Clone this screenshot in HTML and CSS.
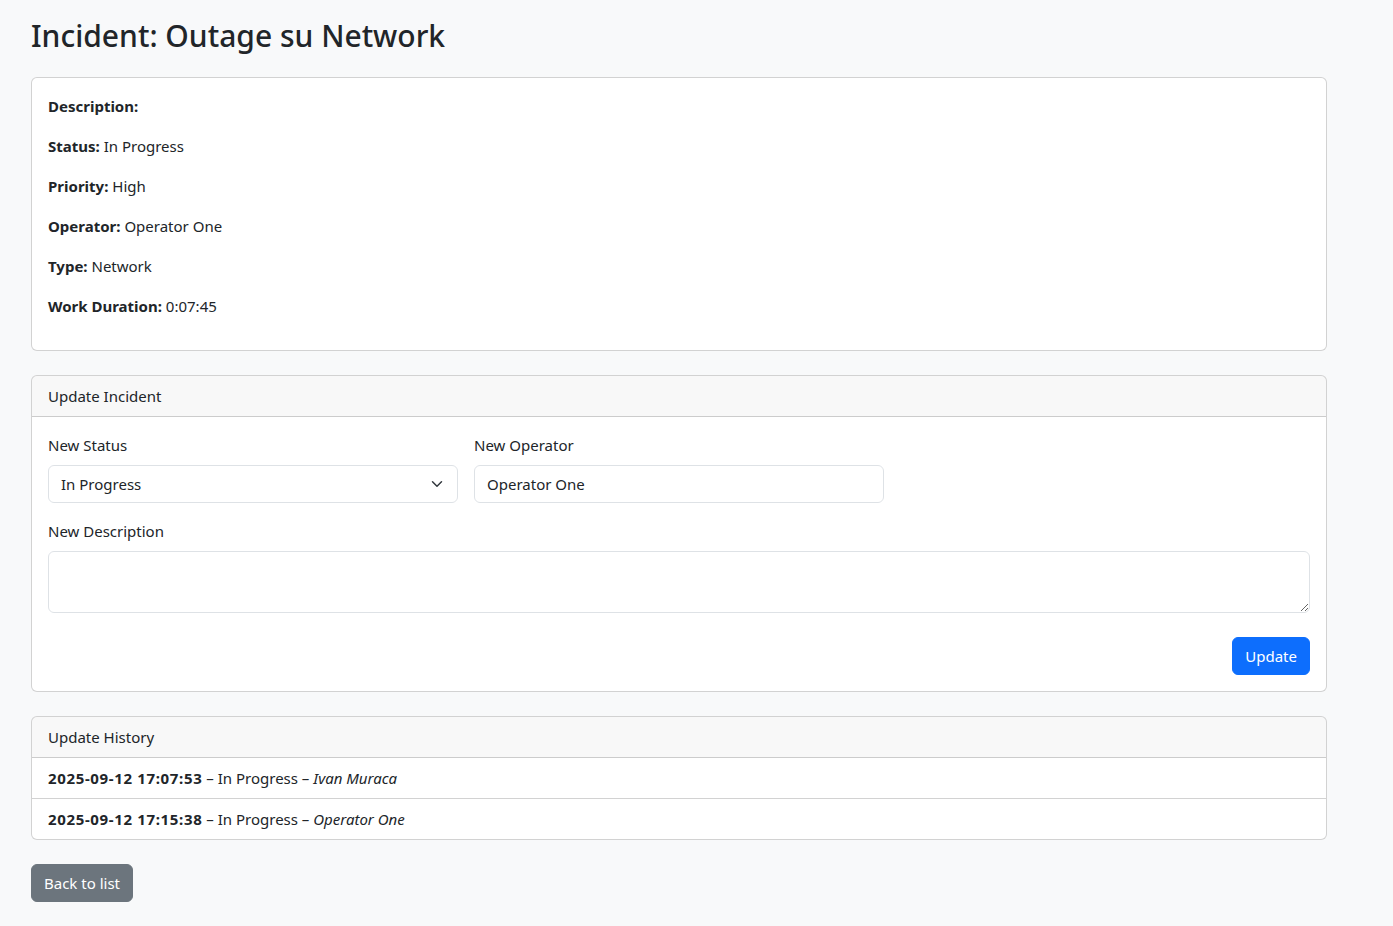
FILE: index.html
```html
<!DOCTYPE html>
<html lang="en">
<head>
<meta charset="utf-8">
<title>Incident: Outage su Network</title>
<link rel="stylesheet" href="styles.css">
</head>
<body>
<div class="container">
  <h1 class="title">Incident: Outage su Network</h1>

  <div class="card">
    <div class="card-body">
      <p><strong>Description:</strong> </p>
      <p><strong>Status:</strong> In Progress</p>
      <p><strong>Priority:</strong> High</p>
      <p><strong>Operator:</strong> Operator One</p>
      <p><strong>Type:</strong> Network</p>
      <p><strong>Work Duration:</strong> 0:07:45</p>
    </div>
  </div>

  <div class="card">
    <div class="card-header">Update Incident</div>
    <div class="card-body">
      <form class="form">
        <div class="row">
          <div class="col">
            <label class="form-label">New Status</label>
            <div class="select">
              <span>In Progress</span>
              <svg class="chev" width="16" height="16" viewBox="0 0 16 16"><path d="m2 5 6 6 6-6" fill="none" stroke="#343a40" stroke-width="2" stroke-linecap="round" stroke-linejoin="round"/></svg>
            </div>
          </div>
          <div class="col">
            <label class="form-label">New Operator</label>
            <input class="form-control" type="text" value="Operator One">
          </div>
        </div>
        <div class="full">
          <label class="form-label">New Description</label>
          <textarea class="form-control textarea" rows="2"></textarea>
        </div>
        <div class="actions">
          <button type="button" class="btn btn-primary">Update</button>
        </div>
      </form>
    </div>
  </div>

  <div class="card">
    <div class="card-header">Update History</div>
    <ul class="list">
      <li class="list-item"><strong class="stamp">2025-09-12 17:07:53</strong> – In Progress – <em>Ivan Muraca</em></li>
      <li class="list-item"><strong class="stamp">2025-09-12 17:15:38</strong> – In Progress – <em>Operator One</em></li>
    </ul>
  </div>

  <a class="btn btn-secondary" href="#">Back to list</a>
</div>
</body>
</html>
```

FILE: styles.css
```css
* { box-sizing: border-box; }

html, body {
  margin: 0;
  padding: 0;
}

body {
  background: #f8f9fa;
  color: #212529;
  font-family: "Noto Sans", "Open Sans", sans-serif;
  font-size: 15px;
  line-height: 24px;
}

.container {
  width: 1296px;
  margin-left: 31px;
  padding-top: 18px;
  padding-bottom: 24px;
}

.title {
  font-size: 30px;
  font-weight: 500;
  line-height: 36px;
  margin: 0 0 23px 0;
}

.card {
  background: #fff;
  border: 1px solid rgba(0, 0, 0, 0.175);
  border-radius: 6px;
  margin-bottom: 24px;
  overflow: hidden;
}

.card-body {
  padding: 16px;
}

.card-body p {
  margin: 0 0 16px 0;
}

.card-header {
  background: rgba(33, 37, 41, 0.03);
  border-bottom: 1px solid rgba(0, 0, 0, 0.175);
  padding: 8px 16px;
}

strong { font-weight: 700; }

.stamp {
  letter-spacing: 0.65px;
}

.row {
  display: flex;
  gap: 16px;
  margin-bottom: 16px;
}

.col {
  width: 410px;
}

.form-label {
  display: block;
  margin-bottom: 8px;
}

.select,
.form-control {
  display: block;
  width: 100%;
  height: 38px;
  padding: 6px 12px;
  font: inherit;
  color: #212529;
  background: #fff;
  border: 1px solid #dee2e6;
  border-radius: 6px;
}

.select {
  display: flex;
  align-items: center;
  justify-content: space-between;
  padding-right: 12px;
}

.chev {
  display: block;
  width: 16px;
  height: 12px;
}

.textarea {
  height: 62px;
  resize: vertical;
}

.actions {
  display: flex;
  justify-content: flex-end;
  margin-top: 24px;
}

.btn {
  display: inline-block;
  font: inherit;
  line-height: 24px;
  padding: 6px 12px;
  border: 1px solid transparent;
  border-radius: 6px;
  text-decoration: none;
  cursor: pointer;
}

.btn-primary {
  background: #0d6efd;
  border-color: #0d6efd;
  color: #fff;
}

.btn-secondary {
  background: #6c757d;
  border-color: #6c757d;
  color: #fff;
}

.list {
  list-style: none;
  margin: 0;
  padding: 0;
}

.list-item {
  padding: 8px 16px;
  border-bottom: 1px solid rgba(0, 0, 0, 0.175);
}

.list-item:last-child {
  border-bottom: 0;
}
```
